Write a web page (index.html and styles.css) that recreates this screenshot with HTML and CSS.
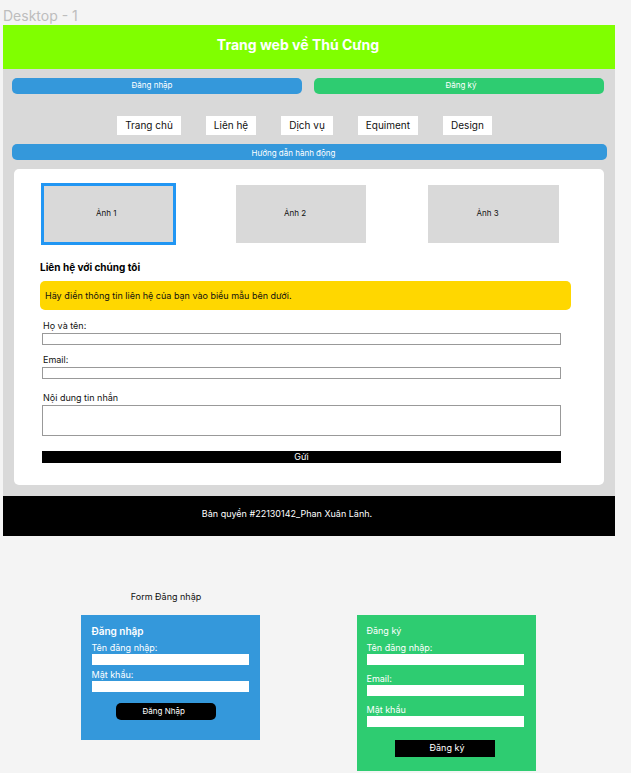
FILE: index.html
```html
<!DOCTYPE html>
<html lang="vi">
<head>
<meta charset="utf-8">
<meta name="viewport" content="width=device-width, initial-scale=1">
<title>Trang web về Thú Cưng</title>
<link rel="stylesheet" href="styles.css">
</head>
<body>
<p class="frame-name">Desktop - 1</p>
<div class="frame">
  <header class="site-header"><h1>Trang web về Thú Cưng</h1></header>
  <div class="content">
    <div class="auth">
      <button type="button" class="auth-button auth-login">Đăng nhập</button>
      <button type="button" class="auth-button auth-register">Đăng ký</button>
    </div>
    <nav class="menu">
      <a href="#">Trang chủ</a>
      <a href="#">Liên hệ</a>
      <a href="#">Dịch vụ</a>
      <a href="#">Equiment</a>
      <a href="#">Design</a>
    </nav>
    <button type="button" class="guide">Hướng dẫn hành động</button>
    <main class="card">
      <div class="gallery">
        <div class="tile tile-selected">Ảnh 1</div>
        <div class="tile">Ảnh 2</div>
        <div class="tile">Ảnh 3</div>
      </div>
      <h2>Liên hệ với chúng tôi</h2>
      <p class="notice">Hãy điền thông tin liên hệ của bạn vào biểu mẫu bên dưới.</p>
      <form class="contact">
        <div class="field">
          <label for="name">Họ và tên:</label>
          <input id="name" type="text">
        </div>
        <div class="field">
          <label for="email">Email:</label>
          <input id="email" type="email">
        </div>
        <div class="field field-message">
          <label for="message">Nội dung tin nhắn</label>
          <textarea id="message"></textarea>
        </div>
        <button type="submit">Gửi</button>
      </form>
    </main>
  </div>
  <footer class="site-footer">Bản quyền #22130142_Phan Xuân Lãnh.</footer>
</div>
<section class="forms">
  <div class="form-column">
    <p class="form-caption">Form Đăng nhập</p>
    <form class="panel panel-login">
      <h3>Đăng nhập</h3>
      <div class="panel-field">
        <label for="login-name">Tên đăng nhập:</label>
        <input id="login-name" type="text">
      </div>
      <div class="panel-field">
        <label for="login-password">Mật khẩu:</label>
        <input id="login-password" type="password">
      </div>
      <button type="submit">Đăng Nhập</button>
    </form>
  </div>
  <div class="form-column">
    <form class="panel panel-register">
      <h3>Đăng ký</h3>
      <div class="panel-field">
        <label for="register-name">Tên đăng nhập:</label>
        <input id="register-name" type="text">
      </div>
      <div class="panel-field">
        <label for="register-email">Email:</label>
        <input id="register-email" type="email">
      </div>
      <div class="panel-field">
        <label for="register-password">Mật khẩu</label>
        <input id="register-password" type="password">
      </div>
      <button type="submit">Đăng ký</button>
    </form>
  </div>
</section>
</body>
</html>
```
FILE: styles.css
```css
* {
  box-sizing: border-box;
}

body {
  margin: 0;
  padding: 7px 16px 2px 3px;
  background: #f4f4f4;
  color: #111;
  font-family: Inter, "Liberation Sans", sans-serif;
  font-size: 9px;
  line-height: 14px;
}

h1, h2, h3, p {
  margin: 0;
}

button, input, textarea {
  display: block;
  margin: 0;
  padding: 0;
  border: 0;
  border-radius: 0;
  font: inherit;
}

.frame-name {
  color: #bdbdbd;
  font-size: 14px;
  line-height: 18px;
}

.frame {
  background: #d9d9d9;
}

.site-header {
  padding: 10px 22px 14px 0;
  background: #80ff00;
  color: #fff;
  text-align: center;
}

.site-header h1 {
  font-size: 14px;
  font-weight: 700;
  line-height: 20px;
}

.content {
  padding: 9px 8px 11px 9px;
}

.auth {
  display: grid;
  grid-template-columns: 1fr 1fr;
  gap: 12px;
  margin-right: 3px;
}

.auth-button, .guide {
  height: 16px;
  border-radius: 5px;
  color: #fff;
  font-size: 8px;
}

.auth-login {
  padding: 0 10px 2px 0;
  background: #3498db;
}

.auth-register {
  padding: 0 0 2px 4px;
  background: #2ecc71;
}

.menu {
  display: flex;
  justify-content: center;
  gap: 25px;
  margin: 22px 10px 9px 0;
}

.menu a {
  padding: 2px 8px;
  background: #fff;
  color: #111;
  font-size: 10px;
  line-height: 15px;
  text-decoration: none;
}

.guide {
  width: 100%;
  padding: 2px 32px 0 0;
  background: #3498db;
}

.card {
  margin: 9px 3px 0 2px;
  padding: 16px 33px 22px 26px;
  border-radius: 5px;
  background: #fff;
}

.gallery {
  display: grid;
  grid-template-columns: repeat(3, 1fr);
  gap: 62px;
  margin: 0 12px 0 3px;
}

.tile {
  display: flex;
  align-items: center;
  justify-content: center;
  height: 58px;
  padding: 0 12px 2px 0;
  background: #d9d9d9;
  font-size: 8px;
}

.tile-selected {
  padding-right: 4px;
  outline: 3px solid #2196f3;
  outline-offset: -1px;
}

.card h2 {
  margin: 17px 0 7px;
  color: #000;
  font-size: 10px;
  line-height: 14px;
}

.notice {
  padding: 8px 5px 7px;
  border-radius: 5px;
  background: #ffd700;
}

.contact {
  display: grid;
  gap: 8px;
  margin: 9px 10px 0 2px;
}

.field input, .field textarea {
  width: 100%;
  height: 12px;
  border: 1px solid #999;
  background: #fff;
}

.field label, .panel-field label {
  display: block;
}

.field label {
  padding-left: 1px;
}

.field-message {
  margin-top: 4px;
}

.field textarea {
  height: 31px;
  resize: none;
}

.contact button {
  height: 12px;
  margin-top: 7px;
  background: #000;
  color: #fff;
  line-height: 12px;
}

.site-footer {
  padding: 11px 44px 15px 0;
  background: #000;
  color: #fff;
  text-align: center;
}

.forms {
  display: flex;
  justify-content: center;
  align-items: flex-start;
  gap: 97px;
  margin-top: 54px;
  padding-right: 2px;
}

.form-column {
  flex: 0 1 179px;
}

.form-column:last-child {
  padding-top: 25px;
}

.form-caption {
  margin-bottom: 11px;
  padding-right: 8px;
  text-align: center;
}

.panel {
  padding: 9px 11px 20px;
  color: #fff;
}

.panel h3 {
  margin-bottom: 4px;
  font-size: 9px;
  font-weight: 400;
}

.panel-field label {
  line-height: 12px;
}

.panel-field input {
  width: 100%;
  height: 11px;
  background: #fff;
}

.panel button {
  width: 64%;
  height: 17px;
  margin: 11px auto 0;
  background: #000;
  color: #fff;
}

.panel-login {
  background: #3498db;
}

.panel-login h3 {
  font-size: 10px;
  font-weight: 600;
}

.panel-login .panel-field + .panel-field {
  margin-top: 4px;
}

.panel-login button {
  margin-left: 24px;
  padding: 0 4px 2px 0;
  border-radius: 5px;
  font-size: 8px;
}

.panel-register {
  padding: 9px 12px 14px 10px;
  background: #2ecc71;
}

.panel-register .panel-field + .panel-field {
  margin-top: 8px;
}

.panel-register button {
  margin-top: 13px;
  padding: 0 0 2px 4px;
}
```
